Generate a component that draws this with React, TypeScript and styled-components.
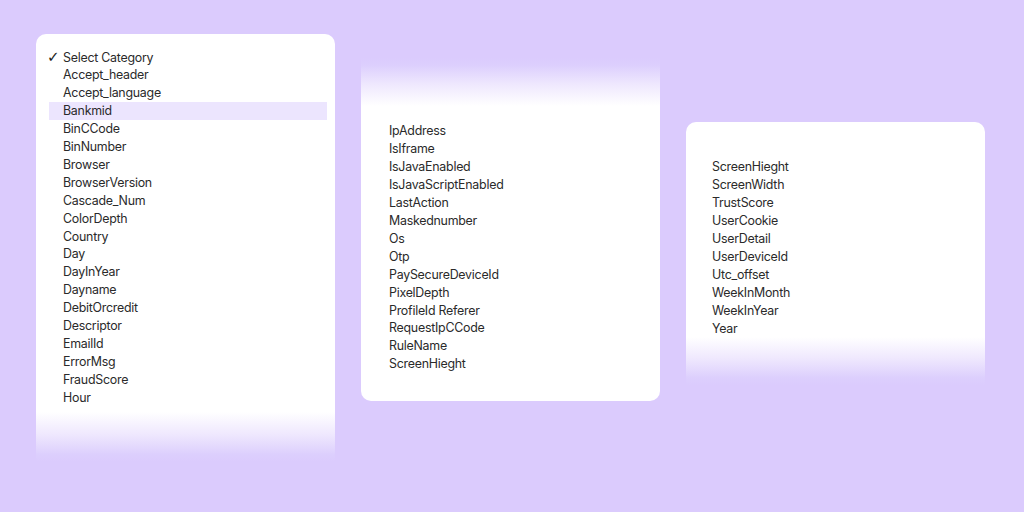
import React from "react";
import styled, { createGlobalStyle } from "styled-components";

const BG = "#dbcbfd";

const Global = createGlobalStyle`
  html, body { margin: 0; padding: 0; background: ${BG}; }
  body { font-family: "Inter", "DejaVu Sans", sans-serif; }
`;

const Page = styled.div`
  width: 1024px;
  height: 512px;
  box-sizing: border-box;
  padding-left: 36px;
  display: flex;
  align-items: flex-start;
  gap: 26px;
  background: ${BG};
  overflow: hidden;
`;

const Card = styled.div<{ $top: number; $pt: number; $pb: number; $pl: number; $fade: "top" | "bottom" }>`
  position: relative;
  width: 299px;
  margin-top: ${(p) => p.$top}px;
  padding: ${(p) => p.$pt}px 8px ${(p) => p.$pb}px ${(p) => p.$pl}px;
  box-sizing: border-box;
  background: #fff;
  border-radius: ${(p) => (p.$fade === "top" ? "0 0 10px 10px" : "10px 10px 0 0")};
`;

const Fade = styled.div<{ $side: "top" | "bottom"; $h: number }>`
  position: absolute;
  left: 0;
  right: 0;
  ${(p) => p.$side}: 0;
  height: ${(p) => p.$h}px;
  pointer-events: none;
  background: linear-gradient(
    ${(p) => (p.$side === "bottom" ? "to bottom" : "to top")},
    rgba(255, 255, 255, 0) 0%,
    rgba(232, 222, 253, 0.7) 45%,
    rgba(219, 205, 253, 0.96) 85%,
    rgba(219, 203, 253, 1) 100%
  );
`;

const List = styled.ul`
  list-style: none;
  margin: 0;
  padding: 0;
`;

const Row = styled.li<{ $active?: boolean }>`
  display: grid;
  grid-template-columns: 14px 1fr;
  align-items: center;
  height: 17.92px;
  font-size: 12.4px;
  letter-spacing: -0.25px;
  color: #2a2a2a;
  background: ${(p) => (p.$active ? "#ece5fe" : "transparent")};
  white-space: nowrap;
`;

const Check = styled.span`
  font-size: 15px;
  margin-left: -2px;
  font-family: "DejaVu Sans", sans-serif;
  color: #1c1c1c;
`;

const col1 = [
  "Select Category",
  "Accept_header",
  "Accept_language",
  "Bankmid",
  "BinCCode",
  "BinNumber",
  "Browser",
  "BrowserVersion",
  "Cascade_Num",
  "ColorDepth",
  "Country",
  "Day",
  "DayInYear",
  "Dayname",
  "DebitOrcredit",
  "Descriptor",
  "EmailId",
  "ErrorMsg",
  "FraudScore",
  "Hour",
];

const col2 = [
  "IpAddress",
  "IsIframe",
  "IsJavaEnabled",
  "IsJavaScriptEnabled",
  "LastAction",
  "Maskednumber",
  "Os",
  "Otp",
  "PaySecureDeviceId",
  "PixelDepth",
  "ProfileId Referer",
  "RequestIpCCode",
  "RuleName",
  "ScreenHieght",
];

const col3 = [
  "ScreenHieght",
  "ScreenWidth",
  "TrustScore",
  "UserCookie",
  "UserDetail",
  "UserDeviceId",
  "Utc_offset",
  "WeekInMonth",
  "WeekInYear",
  "Year",
];

function Items({ items, checked, active }: { items: string[]; checked?: string; active?: string }) {
  return (
    <List>
      {items.map((t, i) => (
        <Row key={i} $active={t === active}>
          <Check>{t === checked ? "✓" : ""}</Check>
          <span>{t}</span>
        </Row>
      ))}
    </List>
  );
}

export default function App() {
  return (
    <>
      <Global />
      <Page>
        <Card $top={34} $pt={14} $pb={56} $pl={13} $fade="bottom">
          <Items items={col1} checked="Select Category" active="Bankmid" />
          <Fade $side="bottom" $h={50} />
        </Card>
        <Card $top={58} $pt={64} $pb={28} $pl={14} $fade="top">
          <Items items={col2} />
          <Fade $side="top" $h={48} />
        </Card>
        <Card $top={122} $pt={36} $pb={48} $pl={12} $fade="bottom">
          <Items items={col3} />
          <Fade $side="bottom" $h={48} />
        </Card>
      </Page>
    </>
  );
}
